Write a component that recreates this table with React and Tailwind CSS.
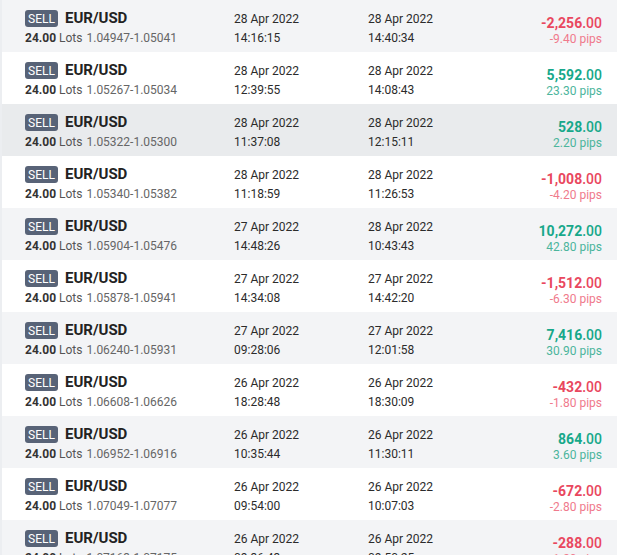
import React from "react";

const trades = [
  { range: "1.04947-1.05041", open: ["28 Apr 2022", "14:16:15"], close: ["28 Apr 2022", "14:40:34"], amount: "-2,256", pips: "-9.40" },
  { range: "1.05267-1.05034", open: ["28 Apr 2022", "12:39:55"], close: ["28 Apr 2022", "14:08:43"], amount: "5,592", pips: "23.30" },
  { range: "1.05322-1.05300", open: ["28 Apr 2022", "11:37:08"], close: ["28 Apr 2022", "12:15:11"], amount: "528", pips: "2.20", hover: true },
  { range: "1.05340-1.05382", open: ["28 Apr 2022", "11:18:59"], close: ["28 Apr 2022", "11:26:53"], amount: "-1,008", pips: "-4.20" },
  { range: "1.05904-1.05476", open: ["27 Apr 2022", "14:48:26"], close: ["28 Apr 2022", "10:43:43"], amount: "10,272", pips: "42.80" },
  { range: "1.05878-1.05941", open: ["27 Apr 2022", "14:34:08"], close: ["27 Apr 2022", "14:42:20"], amount: "-1,512", pips: "-6.30" },
  { range: "1.06240-1.05931", open: ["27 Apr 2022", "09:28:06"], close: ["27 Apr 2022", "12:01:58"], amount: "7,416", pips: "30.90" },
  { range: "1.06608-1.06626", open: ["26 Apr 2022", "18:28:48"], close: ["26 Apr 2022", "18:30:09"], amount: "-432", pips: "-1.80" },
  { range: "1.06952-1.06916", open: ["26 Apr 2022", "10:35:44"], close: ["26 Apr 2022", "11:30:11"], amount: "864", pips: "3.60" },
  { range: "1.07049-1.07077", open: ["26 Apr 2022", "09:54:00"], close: ["26 Apr 2022", "10:07:03"], amount: "-672", pips: "-2.80" },
  { range: "1.07163-1.07175", open: ["26 Apr 2022", "09:36:43"], close: ["26 Apr 2022", "09:50:25"], amount: "-288", pips: "-1.20" },
];

function Row({ t, i }) {
  const loss = t.amount.startsWith("-");
  const bg = t.hover ? "bg-[#e9ebed]" : i % 2 === 0 ? "bg-[#f3f4f6]" : "bg-white";

  return (
    <div className={`flex h-[52px] shrink-0 pl-[23px] pr-[15px] ${bg}`}>
      {/* instrument */}
      <div className="w-[209px] pt-[10px]">
        <div className="flex h-[17px] items-center">
          <span className="flex h-[17px] w-[33px] items-center justify-center rounded-[3px] bg-[#586377] text-[12px] text-white">
            SELL
          </span>
          <span className="ml-[7px] text-[15px] font-bold text-[#222]">EUR/USD</span>
        </div>
        <div className="mt-[3px] text-[12px] leading-[16px]">
          <span className="font-bold text-[#333]">24.00</span>
          <span className="ml-[3px] text-[#555]">Lots</span>
          <span className="ml-[4px] text-[#666]">{t.range}</span>
        </div>
      </div>

      {/* open */}
      <div className="w-[134px] pt-[10px] text-[12px] leading-[19px] text-[#2b2b2b]">
        <div>{t.open[0]}</div>
        <div>{t.open[1]}</div>
      </div>

      {/* close */}
      <div className="flex-1 pt-[10px] text-[12px] leading-[19px] text-[#2b2b2b]">
        <div>{t.close[0]}</div>
        <div>{t.close[1]}</div>
      </div>

      {/* result */}
      <div className="pt-[15px] text-right">
        <div className={`text-[14px] leading-[16px] ${loss ? "text-[#e9475e]" : "text-[#17a88a]"}`}>
          <span className="font-bold">{t.amount}</span>
          <span className="font-medium">.00</span>
        </div>
        <div className={`mt-[1px] text-[12px] leading-[14px] ${loss ? "text-[#f07a8c]" : "text-[#4cb59c]"}`}>
          {t.pips} pips
        </div>
      </div>
    </div>
  );
}

export default function App() {
  return (
    <div
      className="h-[555px] w-[620px] overflow-hidden bg-white"
      style={{ fontFamily: "Roboto, 'Liberation Sans', sans-serif" }}
    >
      <div className="flex w-[617px] flex-col border-l-2 border-[#eceef1]">
        {trades.map((t, i) => (
          <Row key={i} t={t} i={i} />
        ))}
      </div>
    </div>
  );
}
